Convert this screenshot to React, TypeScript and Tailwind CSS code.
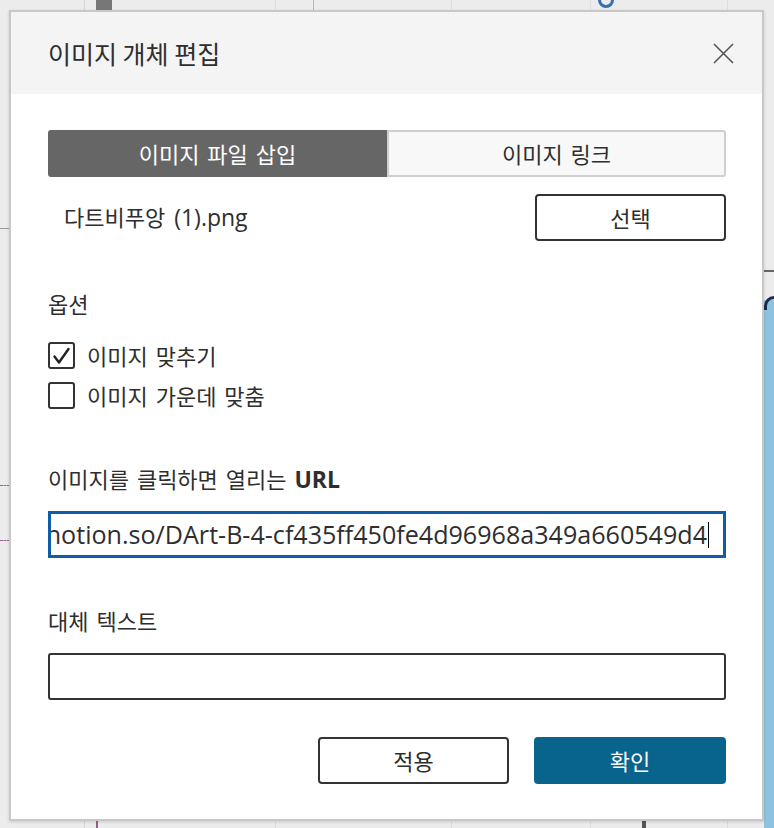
import React from "react";

const KR = "font-['Noto_Sans_CJK_KR',sans-serif]";
const LAT = "font-['Open_Sans','Noto_Sans_CJK_KR',sans-serif]";

function Background() {
  return (
    <>
      <div className="absolute left-[84px] top-0 h-full w-px bg-[#d6d6d6]" />
      <div className="absolute left-[275px] top-0 h-full w-px bg-[#dcdcdc]" />
      <div className="absolute left-[313px] top-0 h-[10px] w-px bg-[#b8b8b8]" />
      <div className="absolute left-[451px] top-0 h-full w-px bg-[#dcdcdc]" />
      <div className="absolute left-[590px] top-0 h-full w-px bg-[#dcdcdc]" />
      <div className="absolute left-[727px] top-0 h-full w-px bg-[#dcdcdc]" />
      <div className="absolute left-[96px] top-0 h-[10px] w-[16px] bg-[#777]" />
      <div className="absolute left-[96px] top-[821px] h-[7px] w-[2px] bg-[#9a5a8a]" />
      <div className="absolute left-[642px] top-[821px] h-[7px] w-[4px] bg-[#555]" />
      <div className="absolute left-[598px] top-[-8px] h-[16px] w-[16px] rounded-full border-[3px] border-[#3a6fb0]" />
      <div className="absolute left-0 top-[228px] h-px w-[10px] bg-[#999]" />
      <div className="absolute left-0 top-[485px] h-0 w-[10px] border-t border-dashed border-[#a0609a]" />
      <div className="absolute left-0 top-[540px] h-0 w-[10px] border-t border-dashed border-[#a0609a]" />
      <div className="absolute left-[764px] top-[270px] h-[2px] w-[10px] bg-[#666]" />
      <div className="absolute left-[764px] top-[300px] h-[528px] w-[10px] bg-[#8ec3e0]" />
      <div className="absolute left-[764px] top-[296px] h-[14px] w-[10px] rounded-tl-full border-l-[3px] border-t-[3px] border-[#1e2a4a]" />
    </>
  );
}

function CheckBox({ checked }: { checked: boolean }) {
  return (
    <div className="w-[27px] h-[27px] border-2 border-[#333] rounded-[3px] bg-white flex items-center justify-center">
      {checked && (
        <svg width="27" height="27" viewBox="0 0 27 27" className="-m-[2px]">
          <path d="M6.5 14.5 L11 20.5 L20.5 7" fill="none" stroke="#222" strokeWidth="2.4" strokeLinecap="round" strokeLinejoin="round" />
        </svg>
      )}
    </div>
  );
}

export default function App() {
  return (
    <div className={`relative w-[774px] h-[828px] overflow-hidden bg-[#ececec] ${KR} text-[#2e2e2e]`}>
      <Background />
      <div className="absolute left-[9px] top-[10px] w-[755px] h-[811px] border-2 border-[#c8c8c8] bg-white shadow-[0_1px_3px_rgba(0,0,0,0.15)] flex flex-col">
        {/* header */}
        <div className="h-[82px] bg-[#f4f4f4] flex items-center justify-between pl-[37px] pr-[28px]">
          <div className="text-[25px] leading-[30px]">이미지 개체 편집</div>
          <svg width="21" height="21" viewBox="0 0 21 21">
            <path d="M1 1 L20 20 M20 1 L1 20" stroke="#555" strokeWidth="1.6" fill="none" />
          </svg>
        </div>

        {/* body */}
        <div className="flex flex-col pl-[37px] pr-[36px] [word-spacing:3px]">
          {/* tabs */}
          <div className="mt-[36px] grid grid-cols-2 h-[47px]">
            <div className="bg-[#666] rounded-l-[3px] flex items-center justify-center text-white text-[22px]">
              이미지 파일 삽입
            </div>
            <div className="bg-[#f8f8f8] border-2 border-[#cfcfcf] rounded-r-[3px] flex items-center justify-center text-[22px]">
              이미지 링크
            </div>
          </div>

          {/* file row */}
          <div className="mt-[17px] flex items-center justify-between">
            <div className="pl-[16px] text-[22px] flex items-baseline">
              <span>다트비푸앙</span>
              <span className={`${LAT} text-[23px]`}>&nbsp;(1).png</span>
            </div>
            <div className="w-[191px] h-[47px] border-2 border-[#333] rounded-[4px] flex items-center justify-center text-[22px]">
              선택
            </div>
          </div>

          {/* options */}
          <div className="mt-[48px] text-[22px] leading-[28px]">옵션</div>
          <div className="mt-[25px] flex items-center gap-[12px]">
            <CheckBox checked />
            <span className="text-[22px] leading-[27px]">이미지 맞추기</span>
          </div>
          <div className="mt-[13px] flex items-center gap-[12px]">
            <CheckBox checked={false} />
            <span className="text-[22px] leading-[27px]">이미지 가운데 맞춤</span>
          </div>

          {/* URL */}
          <div className="mt-[55px] text-[22px] leading-[28px] flex items-baseline">
            <span>이미지를 클릭하면 열리는&nbsp;</span>
            <span className={`${LAT} text-[23px] font-bold`}>URL</span>
          </div>
          <div className="mt-[18px] h-[47px] border-[3px] border-[#0f5ca8] flex items-center justify-end overflow-hidden pr-[14px] [word-spacing:0px]">
            <span className={`${LAT} text-[25.1px] whitespace-nowrap`}>
              https://www.notion.so/DArt-B-4-cf435ff450fe4d96968a349a660549d4
            </span>
            <span className="ml-[1px] w-px h-[26px] bg-black shrink-0" />
          </div>

          {/* alt text */}
          <div className="mt-[48px] text-[22px] leading-[28px]">대체 텍스트</div>
          <div className="mt-[19px] h-[47px] border-2 border-[#333] rounded-[3px]" />

          {/* buttons */}
          <div className="mt-[37px] flex justify-end gap-[25px]">
            <div className="w-[191px] h-[47px] border-2 border-[#333] rounded-[4px] flex items-center justify-center text-[22px]">
              적용
            </div>
            <div className="w-[192px] h-[47px] bg-[#08648c] rounded-[4px] flex items-center justify-center text-[22px] text-white">
              확인
            </div>
          </div>
        </div>
      </div>
    </div>
  );
}
